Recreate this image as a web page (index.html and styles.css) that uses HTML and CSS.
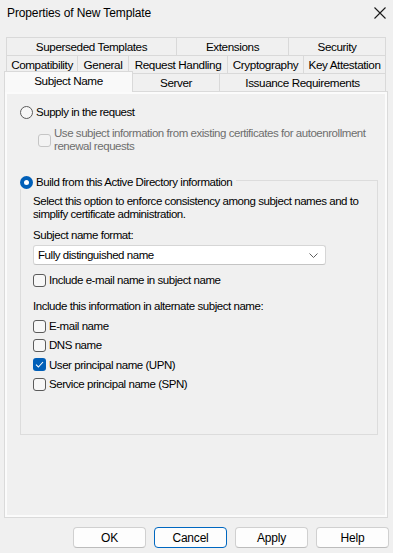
FILE: index.html
```html
<!DOCTYPE html>
<html lang="en">
<head>
<meta charset="utf-8">
<title>Properties of New Template</title>
<link rel="stylesheet" href="styles.css">
</head>
<body>
<div class="window">
  <header class="titlebar">
    <span class="title">Properties of New Template</span>
    <svg class="close" width="12" height="12" viewBox="0 0 12 12"><path d="M0.5 0.5 L11.5 11.5 M11.5 0.5 L0.5 11.5" stroke="#1a1a1a" stroke-width="1.1" fill="none"/></svg>
  </header>

  <nav class="tabs">
    <div class="tabrow">
      <div class="tab w-sup">Superseded Templates</div>
      <div class="tab w-ext">Extensions</div>
      <div class="tab w-sec">Security</div>
    </div>
    <div class="tabrow">
      <div class="tab w-com">Compatibility</div>
      <div class="tab w-gen">General</div>
      <div class="tab w-req">Request Handling</div>
      <div class="tab w-cry">Cryptography</div>
      <div class="tab w-key">Key Attestation</div>
    </div>
    <div class="tabrow">
      <div class="tab selected w-sub">Subject Name</div>
      <div class="tab w-srv">Server</div>
      <div class="tab w-iss">Issuance Requirements</div>
    </div>
  </nav>

  <main class="panel">
    <div class="option">
      <span class="radio"></span>
      <span>Supply in the request</span>
    </div>
    <div class="option sub disabled">
      <span class="check dis"></span>
      <span class="multiline">Use subject information from existing certificates for autoenrollment<br>renewal requests</span>
    </div>

    <fieldset class="group">
      <legend class="legend">
        <span class="option">
          <span class="radio on"></span>
          <span>Build from this Active Directory information</span>
        </span>
      </legend>
      <p class="desc">Select this option to enforce consistency among subject names and to<br>simplify certificate administration.</p>
      <p class="label">Subject name format:</p>
      <div class="select">
        <span>Fully distinguished name</span>
        <svg class="chev" width="9" height="5" viewBox="0 0 9 5"><path d="M0.5 0.5 L4.5 4.5 L8.5 0.5" stroke="#5f5f5f" stroke-width="1" fill="none"/></svg>
      </div>
      <div class="option email">
        <span class="check"></span>
        <span>Include e-mail name in subject name</span>
      </div>
      <p class="label alt">Include this information in alternate subject name:</p>
      <div class="checklist">
        <div class="option"><span class="check"></span><span>E-mail name</span></div>
        <div class="option"><span class="check"></span><span>DNS name</span></div>
        <div class="option"><span class="check on"><svg width="9" height="7" viewBox="0 0 9 7"><path d="M1 3.6 L3.4 6 L8 1" stroke="#fff" stroke-width="1.1" fill="none"/></svg></span><span>User principal name (UPN)</span></div>
        <div class="option"><span class="check"></span><span>Service principal name (SPN)</span></div>
      </div>
    </fieldset>
  </main>

  <footer class="buttons">
    <button class="btn">OK</button>
    <button class="btn default">Cancel</button>
    <button class="btn">Apply</button>
    <button class="btn">Help</button>
  </footer>
</div>
</body>
</html>
```

FILE: styles.css
```css
* { box-sizing: border-box; }
html, body { margin: 0; padding: 0; }
body {
  background: #f0f0f0;
  font-family: "Liberation Sans", Arial, sans-serif;
  font-size: 11.5px;
  letter-spacing: -0.45px;
  color: #000;
}
.window {
  height: 553px;
  display: flex;
  flex-direction: column;
}
.titlebar {
  height: 26px;
  display: flex;
  align-items: center;
  justify-content: space-between;
  padding: 0 7px 0 7px;
  flex: none;
}
.title {
  font-size: 12px;
  letter-spacing: -0.12px;
}

.tabs {
  margin: 11px 7px 0 6px;
  flex: none;
}
.tabrow {
  display: flex;
  height: 18px;
}
.tab {
  height: 19px;
  border: 1px solid #d9d9d9;
  border-bottom: none;
  background: #f0f0f0;
  display: flex;
  align-items: center;
  justify-content: center;
  white-space: nowrap;
  flex: none;
  font-size: 11.7px;
  letter-spacing: -0.4px;
  padding-bottom: 1px;
}
.tab + .tab { margin-left: -1px; }
.w-sup { width: 171px; }
.w-ext { width: 113px; }
.w-sec { width: 98px; }
.w-com { width: 72px; }
.w-gen { width: 52px; }
.w-req { width: 100px; }
.w-cry { width: 77px; }
.w-key { width: 83px; }
.w-srv { width: 88px; }
.w-iss { width: 167px; }
.tab.selected {
  position: relative;
  z-index: 1;
  height: 21px;
  margin-top: -2px;
  margin-left: -2px;
  width: 129px;
  background: #f9f9f9;
  padding-bottom: 3px;
}

.panel {
  flex: 1;
  margin: 0 5px 0 4px;
  border: 1px solid #dadada;
  box-shadow: inset 0 0 0 2px #fbfbfb;
  background: #f0f0f0;
  padding: 13px 11px 0 15px;
}

.option {
  display: flex;
  align-items: center;
  height: 14px;
  gap: 3px;
  white-space: nowrap;
}
.radio {
  width: 13px;
  height: 13px;
  border-radius: 50%;
  border: 1px solid #5b5b5b;
  background: #f7f7f7;
  flex: none;
  display: flex;
  align-items: center;
  justify-content: center;
}
.radio.on {
  border: none;
  background: #005fb8;
}
.radio.on::after {
  content: "";
  width: 5px;
  height: 5px;
  border-radius: 50%;
  background: #fff;
}
.check {
  width: 13px;
  height: 13px;
  border-radius: 3px;
  border: 1px solid #5b5b5b;
  background: #f7f7f7;
  flex: none;
  display: flex;
  align-items: center;
  justify-content: center;
}
.check.on {
  border: none;
  background: #005fb8;
}
.check.dis {
  border-color: #c5c5c5;
  background: #f3f3f3;
}
.option.sub {
  margin: 8px 0 0 18px;
  height: 26px;
  align-items: center;
}
.disabled { color: #6e6e6e; }
.multiline {
  line-height: 13px;
}

.group {
  margin: 18px 0 0 0;
  padding: 0 12px 43px 12px;
  border: 1px solid #dcdcdc;
  width: 358px;
  min-width: 0;
}
.legend {
  padding: 4px 4px 0 0;
  margin-left: -13px;
  height: 18px;
}
.desc {
  margin: 6px 0 0 0;
  line-height: 13px;
  white-space: nowrap;
}
.label {
  margin: 8px 0 0 0;
  line-height: 13px;
}
.select {
  margin-top: 3px;
  width: 293px;
  height: 20px;
  background: #fff;
  border: 1px solid #d6d6d6;
  border-bottom-color: #c4c4c4;
  border-radius: 3px;
  display: flex;
  align-items: center;
  justify-content: space-between;
  padding: 0 7px 0 4px;
}
.option.email { margin-top: 8px; }
.label.alt { margin-top: 13px; }
.checklist {
  margin-top: 6px;
  display: flex;
  flex-direction: column;
  gap: 5.4px;
}

.buttons {
  flex: none;
  display: flex;
  justify-content: flex-end;
  gap: 8px;
  margin: 9px 4px 5px 0;
}
.btn {
  width: 73px;
  height: 21px;
  border: 1px solid #d0d0d0;
  border-bottom-color: #bcbcbc;
  border-radius: 4px;
  background: #fdfdfd;
  font-family: inherit;
  font-size: 12px;
  letter-spacing: -0.2px;
  color: #000;
  padding: 0;
}
.btn.default {
  border: 1px solid #0067c0;
}
```
